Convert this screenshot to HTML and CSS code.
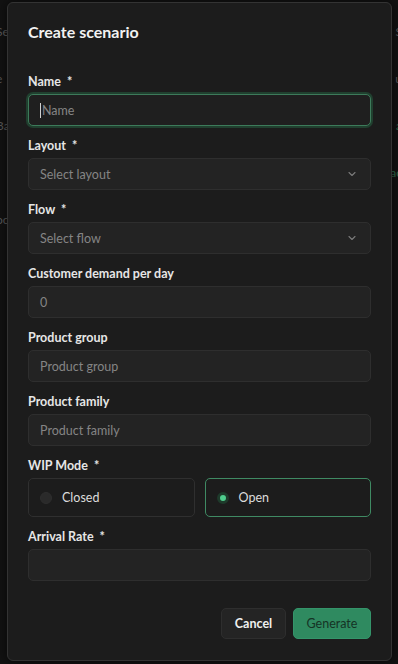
FILE: index.html
```html
<!DOCTYPE html>
<html lang="en">
<head>
    <meta charset="UTF-8">
    <meta name="viewport" content="width=device-width, initial-scale=1.0">
    <title>Create scenario</title>
    <link rel="stylesheet" href="styles.css">
</head>
<body>
    <!-- page behind the modal -->
    <div class="backdrop">
        <div class="bg-row r1"><span>Se</span><span>S</span></div>
        <div class="bg-row r2"><span>e</span><span>u</span></div>
        <div class="bg-row r3"><span>Ba</span><span class="green">a</span></div>
        <div class="bg-row r4"><span></span><span class="green">ac</span></div>
        <div class="bg-row r5"><span>oc</span><span class="green">l</span></div>
    </div>

    <div class="dialog">
        <h1>Create scenario</h1>

        <div class="field">
            <label>Name <span class="req">*</span></label>
            <div class="input focused"><span class="caret"></span><span class="ph">Name</span></div>
        </div>

        <div class="field">
            <label>Layout <span class="req">*</span></label>
            <div class="input select"><span class="ph">Select layout</span>
                <svg width="10" height="10" viewBox="0 0 10 10"><path d="M2 3.5 L5 6.5 L8 3.5" fill="none" stroke="#7a7a7a" stroke-width="1.1" stroke-linecap="round" stroke-linejoin="round"/></svg>
            </div>
        </div>

        <div class="field">
            <label>Flow <span class="req">*</span></label>
            <div class="input select"><span class="ph">Select flow</span>
                <svg width="10" height="10" viewBox="0 0 10 10"><path d="M2 3.5 L5 6.5 L8 3.5" fill="none" stroke="#7a7a7a" stroke-width="1.1" stroke-linecap="round" stroke-linejoin="round"/></svg>
            </div>
        </div>

        <div class="field">
            <label>Customer demand per day</label>
            <div class="input"><span class="ph">0</span></div>
        </div>

        <div class="field">
            <label>Product group</label>
            <div class="input"><span class="ph">Product group</span></div>
        </div>

        <div class="field">
            <label>Product family</label>
            <div class="input"><span class="ph">Product family</span></div>
        </div>

        <div class="field">
            <label>WIP Mode <span class="req">*</span></label>
            <div class="radio-grid">
                <div class="radio-card"><span class="dot"></span>Closed</div>
                <div class="radio-card checked"><span class="dot"></span>Open</div>
            </div>
        </div>

        <div class="field">
            <label>Arrival Rate <span class="req">*</span></label>
            <div class="input"></div>
        </div>

        <div class="actions">
            <button class="btn cancel">Cancel</button>
            <button class="btn primary">Generate</button>
        </div>
    </div>
</body>
</html>
```

FILE: styles.css
```css
html, body {
    margin: 0;
    padding: 0;
}
body {
    font-family: 'Lato', 'Noto Sans', sans-serif;
    background: #121212;
    color: #e8e8e8;
    width: 398px;
    height: 664px;
    overflow: hidden;
    position: relative;
}
.backdrop {
    padding-top: 24px;
    font-size: 12px;
    color: #5a5a5a;
}
.bg-row {
    display: flex;
    justify-content: space-between;
    height: 47px;
    margin: 0 -4px;
}
.bg-row .green {
    color: #2f6a4c;
}
.dialog {
    position: absolute;
    left: 7px;
    top: 2px;
    width: 343px;
    height: 617px;
    padding: 20px;
    background: #1c1c1c;
    border: 1px solid #333;
    border-radius: 6px;
    box-shadow: 0 0 12px rgba(0, 0, 0, 0.6);
}
h1 {
    margin: 0 0 33px 0;
    font-size: 16px;
    line-height: 18px;
    font-weight: 700;
    color: #f2f2f2;
}
.field {
    margin-bottom: 12px;
}
label {
    display: block;
    font-size: 12.5px;
    line-height: 16px;
    font-weight: 700;
    color: #e6e6e6;
    margin-bottom: 4px;
}
.req {
    margin-left: 3px;
}
.input {
    box-sizing: border-box;
    height: 32px;
    background: #232323;
    border: 1px solid #2e2e2e;
    border-radius: 5px;
    padding: 0 11px;
    display: flex;
    align-items: center;
    font-size: 12.5px;
}
.ph {
    color: #858585;
}
.input.focused {
    border-color: #3d7a5a;
    box-shadow: 0 0 0 2px #20402f;
    background: #1f1f1f;
}
.caret {
    width: 1px;
    height: 15px;
    background: #d0d0d0;
    margin-right: 1px;
}
.input.select {
    justify-content: space-between;
    padding-right: 13px;
}
.radio-grid {
    display: grid;
    grid-template-columns: 1fr 1fr;
    gap: 10px;
}
.radio-card {
    box-sizing: border-box;
    height: 39px;
    border: 1px solid #2f2f2f;
    border-radius: 5px;
    display: flex;
    align-items: center;
    padding-left: 11px;
    font-size: 12.5px;
    color: #dcdcdc;
    gap: 10px;
}
.dot {
    width: 12px;
    height: 12px;
    border-radius: 50%;
    background: #2a2a2a;
    border: 1px solid #2e2e2e;
    box-sizing: border-box;
}
.radio-card.checked {
    border-color: #3f8a63;
}
.radio-card.checked .dot {
    background: #4fce8e;
    border: 3px solid #1e3a2b;
}
.actions {
    display: flex;
    justify-content: flex-end;
    gap: 7px;
    margin-top: 27px;
}
.btn {
    height: 31px;
    border-radius: 5px;
    font-family: inherit;
    font-size: 12.5px;
    cursor: pointer;
}
.cancel {
    background: #242424;
    border: 1px solid #2e2e2e;
    color: #f0f0f0;
    font-weight: 700;
    width: 65px;
}
.primary {
    background: #2f8a60;
    border: 1px solid #34946a;
    color: #153325;
    font-weight: 400;
    width: 78px;
}
```
